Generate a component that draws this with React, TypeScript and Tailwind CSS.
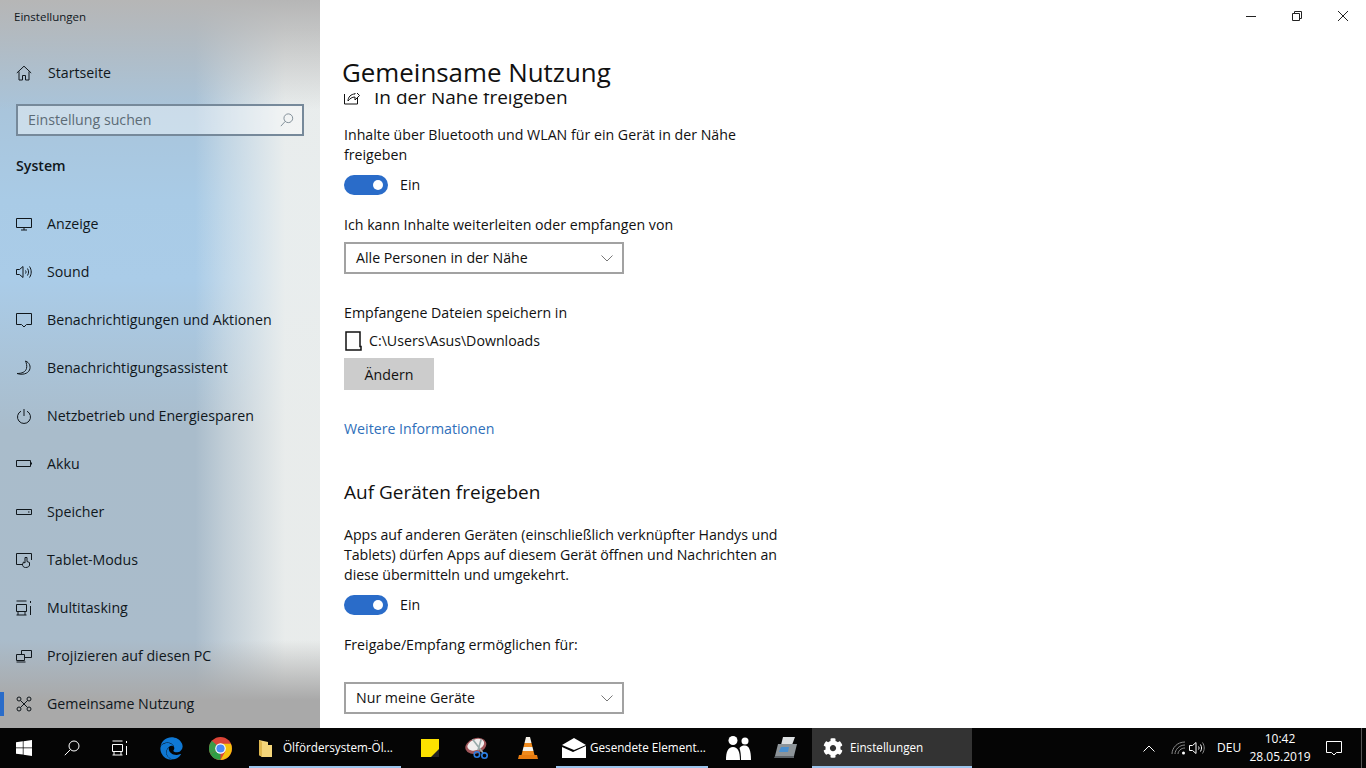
import type { ReactNode } from "react";
import { FaCog, FaEdge } from "react-icons/fa";

// Thin line icon on a 16px grid, like the Settings nav glyphs
function Line({ children, size = 16, className = "" }: { children: ReactNode; size?: number; className?: string }) {
  return (
    <svg width={size} height={size} viewBox="0 0 16 16" fill="none" stroke="currentColor" strokeWidth="1" className={`shrink-0 ${className}`}>
      {children}
    </svg>
  );
}

const navItems: { label: string; icon: ReactNode; active?: boolean }[] = [
  { label: "Anzeige", icon: <Line><path d="M.5 2.500h15v9H.5zM8 11.500v2.500M5 14h6" /></Line> },
  { label: "Sound", icon: <Line><path d="M.5 5.500h3l3.500-3v11l-3.500-3h-3zM9.500 6.500c.7 1 .7 2 0 3M11.500 4.500c1.400 2.300 1.400 4.700 0 7M13.500 2.500c2.300 3.500 2.300 7.500 0 11" /></Line> },
  { label: "Benachrichtigungen und Aktionen", icon: <Line><path d="M.5 1.500h15v11h-5l-2.500 2.500-2.500-2.500h-5z" /></Line> },
  { label: "Benachrichtigungsassistent", icon: <Line><path d="M9.500 1c4 1.500 5.500 5.500 4 9-1.700 3.800-7 5.200-12.500 3.500 5 0 8.500-1.500 9.500-5 .6-2.500 0-5.500-1-7.500z" /></Line> },
  { label: "Netzbetrieb und Energiesparen", icon: <Line><path d="M8 1v7M5 3.200a6.500 6.500 0 1 0 6 0" /></Line> },
  { label: "Akku", icon: <Line><path d="M.5 4.500h14v6H.5zM15.500 6.500v2" /></Line> },
  { label: "Speicher", icon: <Line><path d="M.5 5.500h15v5H.5zM12 8h1.500" /></Line> },
  { label: "Tablet-Modus", icon: <Line><path d="M7 12.500H.5v-11h15V8M9.500 15.500c-2 0-3-1.500-3-3l1-2.500 1.500 1V5.500h2v4l2.500 1v2.500c0 1.500-1.500 2.500-4 2.500z" /></Line> },
  { label: "Multitasking", icon: <Line><path d="M.5 1h10M.5 15h10M.5 4.500h10v7H.5zM2 12v3M9 12v3M14.500 1v2M14.500 6v9" /></Line> },
  { label: "Projizieren auf diesen PC", icon: <Line><path d="M5.500 6V2.500h10v7H9M.5 6.500h8v6h-8zM.5 14h9" /></Line> },
  {
    label: "Gemeinsame Nutzung",
    active: true,
    icon: (
      <Line>
        <circle cx="3" cy="3" r="2" />
        <circle cx="13" cy="3" r="2" />
        <circle cx="3" cy="13" r="2" />
        <circle cx="13" cy="13" r="2" />
        <path d="M4.500 4.500l7 7M11.500 4.500l-7 7" />
      </Line>
    ),
  },
];

function Toggle() {
  return (
    <div className="mt-[10px] flex h-5 items-center">
      <div className="flex h-5 w-11 items-center justify-end rounded-full bg-[#2a6cc9] pr-[5px]">
        <div className="h-[10px] w-[10px] rounded-full bg-white" />
      </div>
      <span className="ml-3">Ein</span>
    </div>
  );
}

function Dropdown({ value, className }: { value: string; className: string }) {
  return (
    <div className={`flex h-8 w-[280px] items-center justify-between border-2 border-[#a2a2a2] pl-[10px] pr-[9px] ${className}`}>
      <span>{value}</span>
      <svg width="12" height="7" viewBox="0 0 12 7" fill="none" stroke="#777" strokeWidth="1">
        <path d="M.5.5L6 6l5.500-5.500" />
      </svg>
    </div>
  );
}

function TaskIcon({ children, className = "w-12" }: { children: ReactNode; className?: string }) {
  return <div className={`flex h-10 shrink-0 items-center justify-center ${className}`}>{children}</div>;
}

function Taskbar() {
  return (
    <div className="flex h-10 shrink-0 items-center bg-[#050505] text-[11.700px] text-white">
      <TaskIcon>
        <svg width="16" height="16" viewBox="0 0 16 16" fill="#fff">
          <path d="M0 2.300l6.800-1v6.200H0zM7.500 1.200L16 0v7.500H7.500zM0 8.300h6.800v6.300L0 13.700zM7.500 8.300H16V16l-8.500-1.200z" />
        </svg>
      </TaskIcon>
      <TaskIcon>
        <Line className="text-white">
          <circle cx="10" cy="6" r="5" />
          <path d="M6.500 9.500L.8 15.200" />
        </Line>
      </TaskIcon>
      <TaskIcon>
        <Line className="text-white">
          <path d="M.5 1h10M.5 15h10M.5 4.500h10v7H.5zM2 12v3M9 12v3M14.500 1v2M14.500 6v9" />
        </Line>
      </TaskIcon>
      <TaskIcon className="ml-[3px] w-12">
        <FaEdge size={23} color="#0f78d4" />
      </TaskIcon>
      <TaskIcon className="ml-px w-12">
        <svg width="23" height="23" viewBox="0 0 24 24">
          <circle cx="12" cy="12" r="12" fill="#db4437" />
          <path d="M12 12L1.500 18A12 12 0 0 0 12 24z" fill="#2f9e44" />
          <path d="M1.500 18A12 12 0 0 1 3 4l9 8z" fill="#3a9b48" />
          <path d="M12 7h10.800A12 12 0 0 1 12 24l5-9z" fill="#f4c20d" />
          <circle cx="12" cy="12" r="5.500" fill="#fff" />
          <circle cx="12" cy="12" r="4.300" fill="#4a8af4" />
        </svg>
      </TaskIcon>
      {/* Explorer window */}
      <div className="relative ml-[5px] flex h-10 w-[152px] shrink-0 items-center pl-[9px]">
        <svg width="15" height="20" viewBox="0 0 15 20">
          <path d="M1 2l9 2v3h4v12H4l-3-2z" fill="#f5d67a" />
          <path d="M1 2l3 2v15l-3-2z" fill="#e0b84f" />
        </svg>
        <span className="ml-[10px] whitespace-nowrap">Ölfördersystem-Öl...</span>
        <div className="absolute inset-x-0 bottom-0 h-[2px] bg-[#9cc4ec]" />
      </div>
      <TaskIcon className="ml-[5px] w-12">
        <div className="relative h-[18px] w-[18px] bg-[#fce100]">
          <div className="absolute bottom-0 right-0 h-0 w-0 border-b-[8px] border-l-[8px] border-b-[#222] border-l-transparent" />
        </div>
      </TaskIcon>
      <TaskIcon>
        <svg width="26" height="26" viewBox="0 0 24 24">
          <ellipse cx="10" cy="10" rx="10" ry="7" fill="#a0565a" transform="rotate(-20 10 10)" />
          <ellipse cx="10" cy="9" rx="8" ry="5" fill="#f2eeee" transform="rotate(-20 10 9)" />
          <path d="M7 4l10 13M15 4L12 14" stroke="#9aa" strokeWidth="1.500" />
          <circle cx="18" cy="19" r="2.500" fill="none" stroke="#2a7de1" strokeWidth="1.500" />
          <circle cx="11" cy="18" r="2.500" fill="none" stroke="#2a7de1" strokeWidth="1.500" />
        </svg>
      </TaskIcon>
      <TaskIcon className="ml-[2px] w-12">
        <svg width="20" height="24" viewBox="0 0 20 24">
          <path d="M8 1h4l1.500 6h-7z" fill="#f6f2ea" />
          <path d="M6.500 7h7l1 4h-9z" fill="#f08a1c" />
          <path d="M5.500 11h9l1 4h-11z" fill="#f6f2ea" />
          <path d="M4.500 15h11l1 4h-13z" fill="#f08a1c" />
          <path d="M1 19h18l1 4H0z" fill="#e87c10" />
        </svg>
      </TaskIcon>
      {/* Mail window */}
      <div className="relative ml-1 flex h-10 w-[152px] shrink-0 items-center pl-[6px]">
        <svg width="24" height="20" viewBox="0 0 24 20" fill="#fff">
          <path d="M0 7L12 0l12 7-12 5z" />
          <path d="M0 9l11 5 13-6v12H0z" />
        </svg>
        <span className="ml-1 whitespace-nowrap">Gesendete Element...</span>
        <div className="absolute inset-x-0 bottom-0 h-[2px] bg-[#9cc4ec]" />
      </div>
      <TaskIcon className="ml-[6px] w-12">
        <svg width="25" height="25" viewBox="0 0 25 25" fill="#fff">
          <circle cx="7" cy="4.500" r="4.500" />
          <circle cx="19" cy="5" r="3.500" />
          <path d="M0 24c0-8 2-13 7-13s7 5 7 13zM15 24c0-5-.5-9-1.500-12 1.500-2 3-2.500 5.500-2.500 4 0 6 5 6 14.500z" />
        </svg>
      </TaskIcon>
      <TaskIcon>
        <svg width="24" height="22" viewBox="0 0 24 22">
          <path d="M9 0h12l-3 8H7z" fill="#dde0e2" />
          <path d="M4 7h19l-3 12H1z" fill="#8d9499" />
          <path d="M7 10h8l-1 5H5z" fill="#4a90d0" />
          <path d="M1 19h19v2H0z" fill="#5d6368" />
        </svg>
      </TaskIcon>
      {/* Active Settings window */}
      <div className="relative ml-[2px] flex h-10 w-[160px] shrink-0 items-center bg-[#333333] pl-[11px]">
        <FaCog size={20} color="#fff" />
        <span className="ml-[7px] whitespace-nowrap">Einstellungen</span>
        <div className="absolute inset-x-0 bottom-0 h-[2px] bg-[#9cc4ec]" />
      </div>
      {/* Tray */}
      <div className="ml-auto flex h-10 items-center">
        <svg width="12" height="7" viewBox="0 0 12 7" fill="none" stroke="#fff" strokeWidth="1">
          <path d="M.5 6.500L6 1l5.500 5.500" />
        </svg>
        <svg width="16" height="16" viewBox="0 0 16 16" fill="none" stroke="#8a8a8a" strokeWidth="1" className="ml-4">
          <path d="M1 14C1 8 6 2 14 2M4 14c0-4 4-9 10-9M7 14c0-3 3-6 7-6" />
          <circle cx="12.500" cy="13" r="1.500" fill="#fff" stroke="none" />
        </svg>
        <Line className="ml-[2px] text-white">
          <path d="M.5 5.500h3l3.500-3v11l-3.500-3h-3z" />
          <path d="M9.500 6.500c.7 1 .7 2 0 3M11.500 4.500c1.400 2.300 1.400 4.700 0 7" />
          <path d="M13.500 2.500c2.300 3.500 2.300 7.500 0 11" stroke="#8a8a8a" />
        </Line>
        <span className="ml-3 w-[25px] text-[12px]">DEU</span>
        <div className="ml-2 flex w-[60px] flex-col items-center text-[12px] leading-[18px]">
          <span>10:42</span>
          <span>28.05.2019</span>
        </div>
        <Line className="ml-4 text-white" size={16}>
          <path d="M.5 1.500h15v11h-5l-2.500 2.500-2.500-2.500h-5z" />
        </Line>
        <div className="ml-[19px] h-10 w-[1px] bg-[#555]" />
        <div className="w-[4px]" />
      </div>
    </div>
  );
}

export default function App() {
  return (
    <div className="flex h-screen w-[1366px] flex-col overflow-hidden bg-white font-['Open_Sans','Liberation_Sans',sans-serif] text-[14.200px] text-[#111]">
      <div className="flex min-h-0 flex-1">
        {/* Acrylic sidebar, layered gradients stand in for the blurred wallpaper */}
        <aside className="flex w-[320px] shrink-0 flex-col bg-[linear-gradient(180deg,#b6b6b6_0px,rgba(182,182,182,0.75)_30px,rgba(182,182,182,0)_110px,rgba(170,170,170,0)_640px,#a9a9a9_700px),linear-gradient(90deg,rgba(238,240,238,0)_195px,rgba(238,240,238,0.35)_225px,rgba(238,240,238,0.92)_285px),linear-gradient(180deg,#a9c4da_100px,#a9cbe6_200px,#aacce8_280px,#a9bccb_430px,#aabccb_650px)] text-[#10171c]">
          <div className="flex h-[34px] items-center pl-[14px] text-[11.500px]">Einstellungen</div>
          <div className="mt-[15px] flex h-12 items-center">
            <Line className="ml-4">
              <path d="M.8 8L8 1.200 15.200 8M3 6.500V15h3.500v-4.500h3V15H13V6.500" />
            </Line>
            <span className="ml-4">Startseite</span>
          </div>
          <div className="ml-4 mt-[7px] flex h-8 w-[288px] items-center justify-between border-2 border-[#76899a] bg-white/40 pl-[10px] pr-2 text-[#5c6b76]">
            <span>Einstellung suchen</span>
            <Line size={14} className="text-[#75838e]">
              <circle cx="9.500" cy="6" r="5" />
              <path d="M6 9.500l-5 5.500" />
            </Line>
          </div>
          <div className="mt-[18px] flex h-6 items-center pl-4 font-semibold">System</div>
          <nav className="mt-[22px] flex flex-col">
            {navItems.map((item) => (
              <div key={item.label} className="relative flex h-12 items-center pl-4">
                {item.active && <div className="absolute left-0 top-3 h-6 w-1 bg-[#2a6cc9]" />}
                {item.icon}
                <span className="ml-[15px]">{item.label}</span>
              </div>
            ))}
          </nav>
        </aside>

        <main className="flex min-w-0 flex-1 flex-col">
          <div className="flex h-8 justify-end text-[#222]">
            <div className="flex w-[46px] items-center justify-center">
              <svg width="10" height="10" viewBox="0 0 10 10" stroke="currentColor" fill="none"><path d="M0 5.500h10" /></svg>
            </div>
            <div className="flex w-[46px] items-center justify-center">
              <svg width="10" height="10" viewBox="0 0 10 10" stroke="currentColor" fill="none"><path d="M.5 2.500h7v7h-7zM2.500 2.500v-2h7v7h-2" /></svg>
            </div>
            <div className="flex w-[46px] items-center justify-center">
              <svg width="10" height="10" viewBox="0 0 10 10" stroke="currentColor" fill="none"><path d="M0 0l10 10M10 0L0 10" /></svg>
            </div>
          </div>
          <h1 className="ml-[22px] mt-[19px] h-[42px] text-[25.900px] leading-[42px]">Gemeinsame Nutzung</h1>

          <div className="min-h-0 flex-1 overflow-hidden pl-6 leading-5">
            <div className="mt-[-10px] flex h-7 items-center text-[19px]">
              <Line>
                <path d="M.5 5v10h13V9M4 12c0-4 3-7 7-7V2l4.500 4.500L11 11V8c-3 0-5 1.500-7 4z" />
              </Line>
              <span className="ml-[14px]">In der Nähe freigeben</span>
            </div>
            <p className="mt-[14px] w-[420px]">Inhalte über Bluetooth und WLAN für ein Gerät in der Nähe freigeben</p>
            <Toggle />
            <p className="mt-5">Ich kann Inhalte weiterleiten oder empfangen von</p>
            <Dropdown value="Alle Personen in der Nähe" className="mt-[7px]" />
            <p className="mt-[29px]">Empfangene Dateien speichern in</p>
            <div className="mt-2 flex h-5 items-center">
              <svg width="18" height="20" viewBox="0 0 18 20" fill="none" stroke="#111" strokeWidth="1.500" className="ml-[1px]">
                <path d="M15 15V1H1v18h15v-3.500h-1z" />
              </svg>
              <span className="ml-[6px]">C:\Users\Asus\Downloads</span>
            </div>
            <div className="mt-[7px] flex h-8 w-[90px] items-center justify-center bg-[#cccccc] pt-[2px]">Ändern</div>
            <p className="mt-[29px] text-[#2f6fba]">Weitere Informationen</p>
            <h2 className="mt-[39px] flex h-7 items-center text-[19px]">Auf Geräten freigeben</h2>
            <p className="mt-[19px] w-[440px] tracking-[-0.05px]">
              Apps auf anderen Geräten (einschließlich verknüpfter Handys und Tablets) dürfen Apps auf diesem Gerät öffnen und Nachrichten an diese übermitteln und umgekehrt.
            </p>
            <Toggle />
            <p className="mt-5">Freigabe/Empfang ermöglichen für:</p>
            <Dropdown value="Nur meine Geräte" className="mt-[27px]" />
          </div>
        </main>
      </div>
      <Taskbar />
    </div>
  );
}
